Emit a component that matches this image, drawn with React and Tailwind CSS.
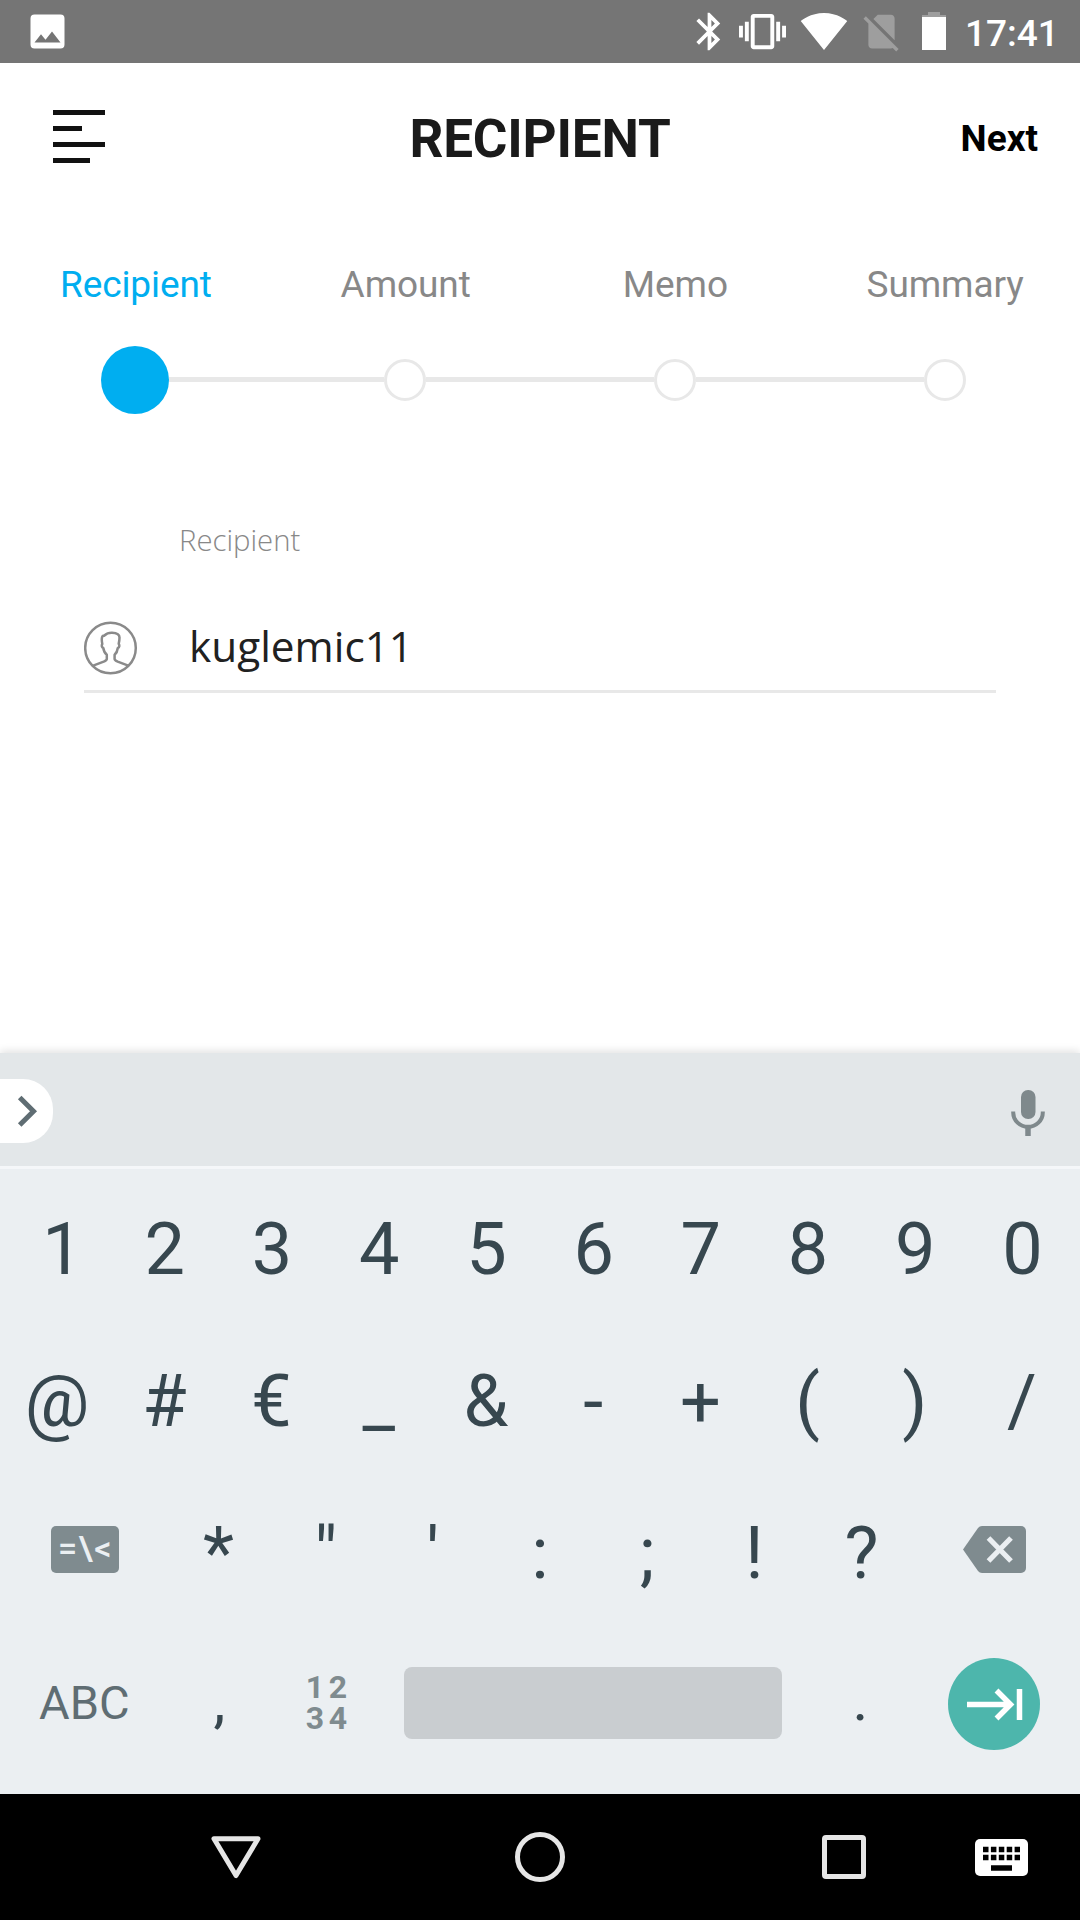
const STEPS = ["Recipient", "Amount", "Memo", "Summary"];
const DIGITS = ["1", "2", "3", "4", "5", "6", "7", "8", "9", "0"];
const SYMBOLS = ["@", "#", "€", "_", "&", "-", "+", "(", ")", "/"];
const PUNCTUATION = ["*", "\"", "'", ":", ";", "!", "?"];

function StatusBar() {
  return (
    <header className="flex h-[63px] items-start bg-[#757575] text-white">
      <svg className="mt-[14px] ml-[30px] h-[35px] w-[35px]" viewBox="0 0 35 35">
        <path
          fill="currentColor"
          fillRule="evenodd"
          d="M4.500 .5h26a4 4 0 0 1 4 4v26a4 4 0 0 1-4 4h-26a4 4 0 0 1-4-4v-26a4 4 0 0 1 4-4zM4.500 28.500h26L22 17.500l-6.500 8.300-4.500-5.500z"
        />
      </svg>
      <svg className="mt-[9px] ml-[622px] h-[45px] w-[45px]" viewBox="0 0 24 24" fill="currentColor">
        <path d="M17.71 7.71L12 2h-1v7.59L6.41 5 5 6.41 10.59 12 5 17.59 6.41 19 11 14.41V22h1l5.71-5.71-4.3-4.29 4.3-4.29zM13 5.83l1.88 1.88L13 9.59V5.83zm1.88 10.46L13 18.17v-3.76l1.88 1.88z" />
      </svg>
      <svg className="mt-[8px] ml-[7px] h-[47px] w-[47px]" viewBox="0 0 24 24" fill="currentColor">
        <path d="M0 15h2V9H0v6zm3 2h2V7H3v10zm19-8v6h2V9h-2zm-3 8h2V7h-2v10zM16.5 3h-9C6.67 3 6 3.67 6 4.500v15c0 .83.67 1.500 1.500 1.500h9c.83 0 1.500-.67 1.500-1.500v-15c0-.83-.67-1.500-1.500-1.500zM16 19H8V5h8v14z" />
      </svg>
      <svg className="mt-[7px] ml-[14px] h-[48px] w-[48px]" viewBox="0 0 24 24" fill="currentColor">
        <path d="M12.010 21.490L23.640 7c-.45-.34-4.930-4-11.640-4C5.280 3 .81 6.660.36 7l11.630 14.490.010.010.010-.010z" />
      </svg>
      <svg className="mt-[9px] ml-[11px] h-[45px] w-[45px] text-[#9e9e9e]" viewBox="0 0 24 24" fill="currentColor">
        <path d="M18.990 5c0-1.100-.89-2-1.990-2h-7L7.660 5.340 19 16.680 18.990 5zM3.650 3.880L2.380 5.150 5 7.770V19c0 1.100.9 2 2 2h10.010c.35 0 .67-.1.96-.26l1.880 1.880 1.270-1.270L3.650 3.880z" />
      </svg>
      <div className="mt-[12px] ml-[18px] flex w-[24px] flex-col items-center">
        <div className="h-[3px] w-[12px] bg-[#9e9e9e]" />
        <div className="h-[2px] w-full bg-[#9e9e9e]" />
        <div className="h-[33px] w-full bg-white" />
      </div>
      <span className="mt-[9px] ml-[19px] text-[37px] leading-[50px] font-medium">17:41</span>
    </header>
  );
}

function TitleBar() {
  return (
    <div className="grid h-[150px] grid-cols-[1fr_auto_1fr] items-center px-[42px]">
      <div className="-mt-[3px] ml-[11px] flex flex-col gap-[11px]">
        <div className="h-[5px] w-[52px] bg-[#111]" />
        <div className="h-[5px] w-[29px] bg-[#111]" />
        <div className="h-[5px] w-[52px] bg-[#111]" />
        <div className="h-[5px] w-[37px] bg-[#111]" />
      </div>
      <h1 className="mt-[2px] text-[53px] leading-[60px] font-bold tracking-[-0.2px] text-[#1a1a1a]">RECIPIENT</h1>
      <button className="mt-[2px] justify-self-end text-[37px] leading-[44px] font-bold text-black">Next</button>
    </div>
  );
}

function Stepper() {
  return (
    <nav className="pt-[48px]">
      <div className="grid grid-cols-4 pl-px">
        {STEPS.map((step, i) => (
          <span
            key={step}
            className={"text-center text-[37px] leading-[48px] tracking-[-0.1px] " + (i === 0 ? "text-[#00aef0]" : "text-[#888]")}
          >
            {step}
          </span>
        ))}
      </div>
      <div className="mt-[37px] flex h-[68px] items-center pr-[114px] pl-[101px]">
        <div className="size-[68px] shrink-0 rounded-full bg-[#00aef0]" />
        {STEPS.slice(1).map((step, i) => (
          <div key={step} className="flex items-center">
            <div className={"mb-px h-[5px] bg-[#e8e8e8] " + (i === 0 ? "w-[215px]" : "w-[228px]")} />
            <div className="size-[42px] rounded-full border-[3px] border-[#e8e8e8] bg-white" />
          </div>
        ))}
      </div>
    </nav>
  );
}

function RecipientField() {
  return (
    <section className="px-[84px] pt-[106px]">
      <label className="ml-[95px] block font-['Open_Sans'] text-[29.3px] leading-[40px] font-light text-[#888]">
        Recipient
      </label>
      <div className="mt-[46px] flex h-[87px] items-start border-b-[3px] border-[#e8e8e8]">
        <svg className="mt-[15px] size-[54px]" viewBox="0 0 54 54" fill="none" stroke="#8a8a8a" strokeWidth="2.500">
          <circle cx="26.500" cy="27" r="25.300" />
          <path
            strokeLinejoin="round"
            d="M8.500 44.800l11.200-4.200c2.200-.9 3.100-1.400 3.100-2.600v-4.300c-1.900-1.600-3.200-4-3.500-6.700-1.500-.5-2-2.600-1-4-.7-3.500-.9-6 .2-7.700.5-.6 1.300-.3 1.900-.8 2-1.900 4.500-2.800 7.600-2.700 4.300.2 7.500 1.500 7.500 4.700 0 2.200-.3 4.300-.8 6.300 1.100 1.600.8 3.700-.9 4.200-.3 2.700-1.400 5.100-3.200 6.700V38c0 1.200.9 1.700 3.100 2.600l11.200 4.200"
          />
        </svg>
        <span className="mt-[11px] ml-[51px] font-['Open_Sans'] text-[42.3px] leading-[58px] text-[#212121]">
          kuglemic11
        </span>
      </div>
    </section>
  );
}

function KeyRow({ keys, className }) {
  return (
    <div className={"flex h-[152px] " + className}>
      {keys.map((k) => (
        <span
          key={k}
          className={"flex-1 text-center text-[72px] leading-[152px] text-[#37474f] " + (k === "1" ? "indent-[10px]" : "")}
        >
          {k}
        </span>
      ))}
    </div>
  );
}

function Keyboard() {
  return (
    <section className="flex h-[741px] flex-col bg-[#ebeff2] shadow-[0_-2px_8px_rgba(0,0,0,0.12)]">
      <div className="flex h-[116px] items-start justify-between border-b-[3px] border-[#f5f7f9] bg-[#e3e7e9] pr-[35px]">
        <div className="mt-[26px] h-[64px] w-[53px] rounded-r-[30px] bg-white">
          <svg className="h-[64px] w-[52px]" viewBox="0 0 52 64" fill="none" stroke="#5f6d73" strokeWidth="5">
            <path d="M19.700 18.500L33.500 32.300 19.700 46.100" />
          </svg>
        </div>
        <svg className="mt-[37px] h-[47px] w-[34px]" viewBox="0 0 34 47" fill="none" stroke="#7f898c">
          <rect x="10" y="0" width="14.500" height="29" rx="7" fill="#7f898c" stroke="none" />
          <path d="M2.200 21.500v1a14.800 14.300 0 0 0 29.600 0v-1" strokeWidth="4" />
          <path d="M17 37v9" strokeWidth="5.500" />
        </svg>
      </div>

      <div className="pt-[5px]">
        <KeyRow keys={DIGITS} className="px-1" />
        <KeyRow keys={SYMBOLS} className="pr-[4.500px] pl-[3.500px]" />
      </div>

      <div className="flex h-[151px] pr-[4px] pl-[4px]">
        <div className="flex w-[161px] items-start pl-[47px]">
          <div className="mt-[48px] flex h-[47px] w-[68px] items-center justify-center rounded-[5px] bg-[#7f8b8f] pb-[2px] pl-[1px] text-[34px] leading-[45px] font-medium tracking-[1.5px] text-[#ebeff2]">
            <span>=\&lt;</span>
          </div>
        </div>
        {PUNCTUATION.map((k) => (
          <span key={k} className="flex-1 text-center text-[72px] leading-[151px] text-[#37474f]">
            {k}
          </span>
        ))}
        <div className="flex w-[161px] items-start pl-[48px]">
          <svg className="mt-[48px] h-[47px] w-[64px]" viewBox="0 0 64 47">
            <path
              fill="#7f8b8f"
              d="M19 0h39a5 5 0 0 1 5 5v37a5 5 0 0 1-5 5H19q-2.500 0-4-2L0 23.500 15 2q1.500-2 4-2z"
            />
            <path d="M25.500 12L48 35M48 12L25.500 35" stroke="#ebeff2" strokeWidth="5.200" />
          </svg>
        </div>
      </div>

      <div className="flex flex-1 items-start">
        <span className="mt-[44px] w-[166px] pl-[39px] text-[47px] leading-[60px] text-[#5f6d73]">
          ABC
        </span>
        <span className="mt-[37px] w-[107px] text-center text-[60px] leading-[70px] text-[#37474f]">,</span>
        <div className="mt-[43px] grid w-[107px] grid-cols-[23px_23px] justify-center text-center text-[32px] leading-[31px] font-bold text-[#7f8b8f]">
          <span>1</span>
          <span>2</span>
          <span>3</span>
          <span>4</span>
        </div>
        <div className="mt-[38px] ml-[24px] h-[72px] w-[378px] rounded-[8px] bg-[#c9cdd0]" />
        <span className="mt-[36px] ml-[25px] w-[107px] text-center text-[60px] leading-[70px] text-[#37474f]">.</span>
        <div className="mt-[29px] ml-[34px] size-[92px] rounded-full bg-[#4db6ac]">
          <svg className="size-[92px]" viewBox="0 0 92 92" fill="none" stroke="#fff" strokeWidth="5.500">
            <path d="M19 46.500h43M48.500 32.500l14 14-14 14M71.500 31v31" />
          </svg>
        </div>
      </div>
    </section>
  );
}

function NavigationBar() {
  return (
    <footer className="flex h-[126px] items-start bg-black text-[#e6e6e6]">
      <svg className="mt-[41px] ml-[211px] h-[45px] w-[50px]" viewBox="0 0 50 45" fill="none" stroke="currentColor" strokeWidth="5" strokeLinejoin="round">
        <path d="M3 3.700h44L25 40.500z" />
      </svg>
      <div className="mt-[38px] ml-[254px] size-[50px] rounded-full border-[5.5px] border-current" />
      <div className="mt-[41px] ml-[257px] h-[44px] w-[44px] rounded-[4px] border-[5px] border-current" />
      <svg className="mt-[45px] ml-[109px] h-[37px] w-[53px]" viewBox="0 0 53 37">
        <rect width="53" height="37" rx="5" fill="#fff" />
        <path
          d="M8 10.500h37M8 18.500h37"
          stroke="#000"
          strokeWidth="5.500"
          strokeDasharray="5.500 2.400"
        />
        <path d="M16 29h21" stroke="#000" strokeWidth="5.500" />
      </svg>
    </footer>
  );
}

export default function App() {
  return (
    <div className="flex h-[1920px] w-[1080px] flex-col overflow-hidden bg-white font-['Roboto',sans-serif]">
      <StatusBar />
      <main className="flex-1">
        <TitleBar />
        <Stepper />
        <RecipientField />
      </main>
      <Keyboard />
      <NavigationBar />
    </div>
  );
}
